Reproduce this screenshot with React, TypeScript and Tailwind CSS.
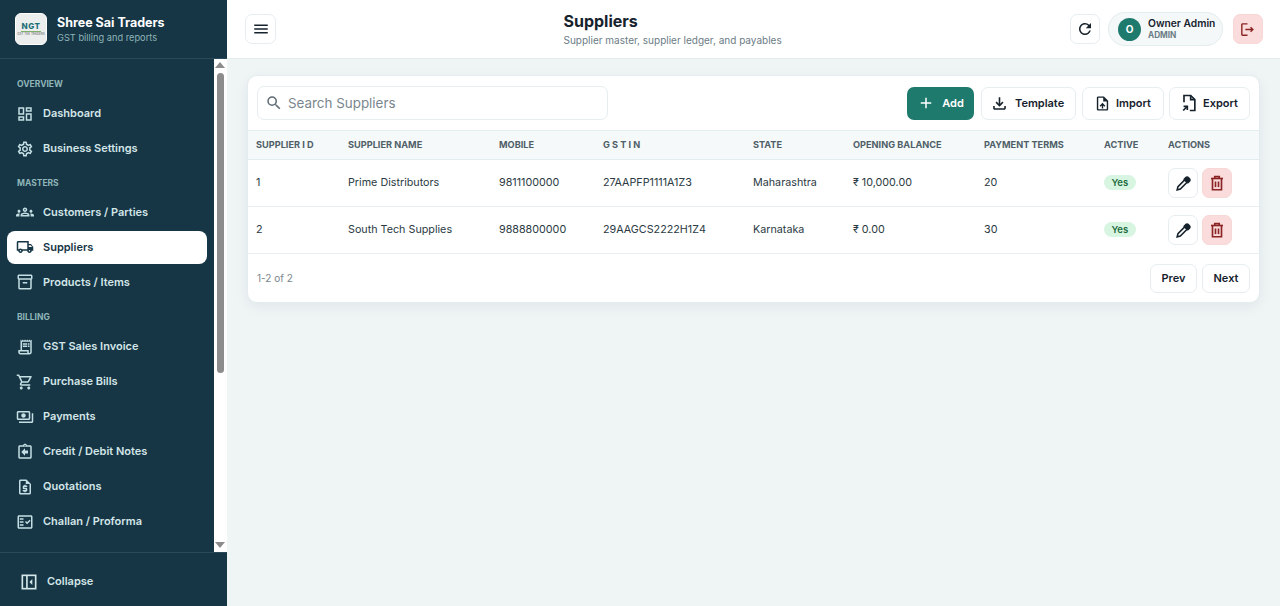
import {
  MdAdd,
  MdMenu,
  MdOutlineAssignmentReturn,
  MdOutlineDashboard,
  MdOutlineFactCheck,
  MdOutlineFileDownload,
  MdOutlineGroups,
  MdOutlineInventory2,
  MdOutlineLocalShipping,
  MdOutlineLogout,
  MdOutlinePayments,
  MdOutlineReceiptLong,
  MdOutlineRequestQuote,
  MdOutlineSettings,
  MdOutlineShoppingCart,
  MdOutlineUploadFile,
  MdRefresh,
  MdSearch,
} from 'react-icons/md';

const sections = [
  {
    title: 'OVERVIEW',
    gap: '',
    items: [
      { label: 'Dashboard', icon: MdOutlineDashboard },
      { label: 'Business Settings', icon: MdOutlineSettings },
    ],
  },
  {
    title: 'MASTERS',
    gap: 'mt-[10.5px]',
    items: [
      { label: 'Customers / Parties', icon: MdOutlineGroups },
      { label: 'Suppliers', icon: MdOutlineLocalShipping, active: true },
      { label: 'Products / Items', icon: MdOutlineInventory2 },
    ],
  },
  {
    title: 'BILLING',
    gap: 'mt-[11.5px]',
    items: [
      { label: 'GST Sales Invoice', icon: MdOutlineReceiptLong },
      { label: 'Purchase Bills', icon: MdOutlineShoppingCart },
      { label: 'Payments', icon: MdOutlinePayments },
      { label: 'Credit / Debit Notes', icon: MdOutlineAssignmentReturn },
      { label: 'Quotations', icon: MdOutlineRequestQuote },
      { label: 'Challan / Proforma', icon: MdOutlineFactCheck },
    ],
  },
];

const suppliers = [
  { id: '1', name: 'Prime Distributors', mobile: '9811100000', gstin: '27AAPFP1111A1Z3', state: 'Maharashtra', balance: '₹ 10,000.00', terms: '20' },
  { id: '2', name: 'South Tech Supplies', mobile: '9888800000', gstin: '29AAGCS2222H1Z4', state: 'Karnataka', balance: '₹ 0.00', terms: '30' },
];

function ExportIcon() {
  return (
    <svg width="20" height="20" viewBox="0 0 24 24" fill="none" stroke="currentColor" strokeWidth="2">
      <path d="M6 11V3h8l5 5v13h-6" />
      <path d="M14 3v5h5" />
      <path d="M5 21l5-5" />
      <path d="M5.5 16H10v4.5" />
    </svg>
  );
}

function CollapseIcon() {
  return (
    <svg width="20" height="20" viewBox="0 0 24 24" fill="none" stroke="currentColor" strokeWidth="2">
      <rect x="4" y="4" width="16" height="16" />
      <path d="M9.5 4v16" />
      <path d="M16 8.5v7L12.5 12z" fill="currentColor" stroke="none" />
    </svg>
  );
}

function PencilIcon() {
  return (
    <svg width="19" height="19" viewBox="0 0 24 24" fill="none" stroke="currentColor" strokeWidth="2">
      <path d="M13.5 7.5l3 3L8 19l-4 1 1-4z" />
      <path d="M15 4.5a2.1 2.1 0 0 1 3 0l1.5 1.5a2.1 2.1 0 0 1 0 3L17.5 11 13 6.5z" fill="currentColor" />
    </svg>
  );
}

function TrashIcon() {
  return (
    <svg width="18" height="18" viewBox="0 0 24 24" fill="none" stroke="currentColor" strokeWidth="2.2">
      <path d="M4 6h16" />
      <path d="M9 6V3.5h6V6" />
      <path d="M6 6v15h12V6" />
      <path d="M10 10v7.5" />
      <path d="M14 10v7.5" />
    </svg>
  );
}

function Logo() {
  return (
    <div className="flex flex-col items-center justify-center w-[32px] h-[32px] rounded-[6px] bg-[#eceeed] border border-white">
      <span className="text-[8px] leading-[9px] font-extrabold text-[#1f6f78] tracking-[0.5px]">NGT</span>
      <span className="h-[1px] w-[20px] bg-[#7fb069]" />
      <span className="text-[3px] leading-[5px] text-[#555]">GST TAX TRADERS</span>
    </div>
  );
}

function FakeScrollbar() {
  return (
    <div className="flex flex-col items-center w-[13.5px] shrink-0 bg-white pt-[3px] pb-[4px]">
      <div className="w-0 h-0 border-x-[5px] border-x-transparent border-b-[6px] border-b-[#8c8c8c]" />
      <div className="w-[7.5px] h-[300px] mt-[5px] rounded-full bg-[#8c8c8c]" />
      <div className="mt-auto w-0 h-0 border-x-[5px] border-x-transparent border-t-[6px] border-t-[#8c8c8c]" />
    </div>
  );
}

function Sidebar() {
  return (
    <aside className="flex flex-col w-[227px] h-full shrink-0 bg-[#163545]">
      <div className="flex items-center gap-[10px] h-[59px] pl-[15px] border-b border-[#2a4a59]">
        <Logo />
        <div>
          <div className="text-[12.5px] leading-[17px] font-bold text-white">Shree Sai Traders</div>
          <div className="text-[9.25px] leading-[13px] text-[#8fb5b8]">GST billing and reports</div>
        </div>
      </div>
      <div className="flex flex-1 min-h-0">
        <nav className="flex-1 min-w-0 overflow-hidden pt-[18px]">
          {sections.map(section => (
            <div key={section.title} className={section.gap}>
              <div className="pl-[17px] h-[15px] text-[8.5px] leading-[15px] font-bold text-[#8fb5b8]">{section.title}</div>
              <div className="flex flex-col gap-[2px] mt-[5px]">
                {section.items.map(item => (
                  <div
                    key={item.label}
                    className={`flex items-center gap-[9px] h-[33px] ml-[7px] mr-[6.5px] pl-[9px] rounded-[8px] text-[11px] font-semibold ${item.active ? 'bg-white text-[#163545]' : 'text-[#d3e6e8]'}`}
                  >
                    <item.icon size={18} className={item.active ? '' : 'text-[#c3dfe3]'} />
                    {item.label}
                  </div>
                ))}
              </div>
            </div>
          ))}
        </nav>
        <FakeScrollbar />
      </div>
      <div className="flex items-center gap-[8px] h-[54px] pl-[19px] pt-[4px] border-t border-[#2a4a59] text-[11px] font-semibold text-[#d3e6e8]">
        <CollapseIcon />
        Collapse
      </div>
    </aside>
  );
}

function Header() {
  return (
    <header className="flex items-center h-[59px] shrink-0 pl-[18px] pr-[17.5px] bg-white border-b border-[#e3ecee]">
      <button className="flex items-center justify-center w-[31px] h-[30px] rounded-[7px] border border-[#e6eef0] text-[#16222c]">
        <MdMenu size={18} />
      </button>
      <div className="ml-[287.5px]">
        <h1 className="text-[16px] leading-[22px] font-bold text-[#16222c]">Suppliers</h1>
        <p className="text-[10px] leading-[16px] text-[#6b7c85]">Supplier master, supplier ledger, and payables</p>
      </div>
      <div className="flex items-center ml-auto">
        <button className="flex items-center justify-center w-[30px] h-[30px] rounded-[7px] border border-[#e6eef0] text-[#16222c]">
          <MdRefresh size={18} />
        </button>
        <div className="flex items-center gap-[7px] h-[34px] w-[115px] ml-[8px] pl-[9px] rounded-full border border-[#e3ecee] bg-[#f4f8f9]">
          <span className="flex items-center justify-center w-[23px] h-[23px] rounded-full bg-[#1f7a6e] text-white text-[10px] font-bold">O</span>
          <div>
            <div className="text-[10.25px] leading-[13px] font-semibold text-[#16222c]">Owner Admin</div>
            <div className="text-[8.25px] leading-[11px] font-bold text-[#6b7c85]">ADMIN</div>
          </div>
        </div>
        <button className="flex items-center justify-center w-[30px] h-[30px] ml-[9.5px] rounded-[7px] border border-[#f8d7d7] bg-[#fbdcdc] text-[#8b2525]">
          <MdOutlineLogout size={17} />
        </button>
      </div>
    </header>
  );
}

function ToolButton({ icon, label, className }: { icon: React.ReactNode; label: string; className: string }) {
  return (
    <button className={`flex items-center h-[33px] rounded-[7px] border border-[#e6eef0] bg-white text-[11px] font-semibold text-[#16222c] ${className}`}>
      {icon}
      {label}
    </button>
  );
}

function SuppliersCard() {
  const heads = [
    ['SUPPLIER I D', 'w-[92px]'],
    ['SUPPLIER NAME', 'w-[151px]'],
    ['MOBILE', 'w-[104px]'],
    ['G S T I N', 'w-[150px]'],
    ['STATE', 'w-[100px]'],
    ['OPENING BALANCE', 'w-[131px]'],
    ['PAYMENT TERMS', 'w-[120px]'],
    ['ACTIVE', 'w-[64px]'],
    ['ACTIONS', ''],
  ];
  return (
    <div className="rounded-[10px] border border-[#e3ecee] bg-white shadow-[0_4px_14px_rgba(22,53,69,0.06)]">
      <div className="flex items-center justify-between h-[54px] pl-[9px] pr-[9px]">
        <div className="flex items-center gap-[5px] w-[351px] h-[34px] pl-[7px] rounded-[7px] border border-[#e6eef0] text-[13.4px] text-[#7a868d]">
          <MdSearch size={18} className="text-[#5f6c74]" />
          Search Suppliers
        </div>
        <div className="flex items-center">
          <button className="flex items-center justify-center gap-[7px] w-[67px] h-[33px] rounded-[7px] bg-[#1f7a6e] text-[11px] font-semibold text-white">
            <MdAdd size={18} />
            Add
          </button>
          <ToolButton icon={<MdOutlineFileDownload size={19} />} label="Template" className="w-[95px] ml-[7px] pl-[8px] gap-[6px]" />
          <ToolButton icon={<MdOutlineUploadFile size={17} />} label="Import" className="w-[82px] ml-[6px] pl-[11px] gap-[5px]" />
          <ToolButton icon={<ExportIcon />} label="Export" className="w-[81px] ml-[5px] pl-[9px] gap-[4px]" />
        </div>
      </div>
      <table className="w-full table-fixed border-collapse">
        <thead>
          <tr className="h-[29px] bg-[#f5f9fa] border-y border-[#e3ecee]">
            {heads.map(([title, width]) => (
              <th key={title} className={`${width} pl-[8px] text-left text-[9.2px] font-bold text-[#4f5f68]`}>{title}</th>
            ))}
          </tr>
        </thead>
        <tbody>
          {suppliers.map(s => (
            <tr key={s.id} className="h-[47px] border-b border-[#e8eff1] text-[10.75px] text-[#2b3a43]">
              <td className="pl-[8px]">{s.id}</td>
              <td className="pl-[8px]">{s.name}</td>
              <td className="pl-[8px]">{s.mobile}</td>
              <td className="pl-[8px]">{s.gstin}</td>
              <td className="pl-[8px]">{s.state}</td>
              <td className="pl-[8px]">{s.balance}</td>
              <td className="pl-[8px]">{s.terms}</td>
              <td className="pl-[8px]">
                <span className="inline-block px-[7.5px] rounded-full bg-[#d8f5e2] text-[9.5px] leading-[15px] font-semibold text-[#1c6b3c]">Yes</span>
              </td>
              <td className="pl-[8px]">
                <div className="flex gap-[4px]">
                  <button className="flex items-center justify-center w-[30px] h-[30px] rounded-[7px] border border-[#e6eef0] text-[#16222c]">
                    <PencilIcon />
                  </button>
                  <button className="flex items-center justify-center w-[30px] h-[30px] rounded-[7px] border border-[#f8d7d7] bg-[#fbdcdc] text-[#8b2525]">
                    <TrashIcon />
                  </button>
                </div>
              </td>
            </tr>
          ))}
        </tbody>
      </table>
      <div className="flex items-center justify-between h-[48px] pl-[9px] pr-[9px]">
        <span className="text-[10px] text-[#7a868d]">1-2 of 2</span>
        <div className="flex gap-[5px]">
          <button className="w-[47px] h-[29px] rounded-[7px] border border-[#e6eef0] text-[11px] font-semibold text-[#16222c]">Prev</button>
          <button className="w-[48px] h-[29px] rounded-[7px] border border-[#e6eef0] text-[11px] font-semibold text-[#16222c]">Next</button>
        </div>
      </div>
    </div>
  );
}

export default function App() {
  return (
    <div className="flex w-full h-[606px] overflow-hidden bg-[#eff4f5] font-['Inter',sans-serif]">
      <Sidebar />
      <main className="flex flex-col flex-1 min-w-0">
        <Header />
        <div className="pt-[16px] pl-[20px] pr-[20px]">
          <SuppliersCard />
        </div>
      </main>
    </div>
  );
}
